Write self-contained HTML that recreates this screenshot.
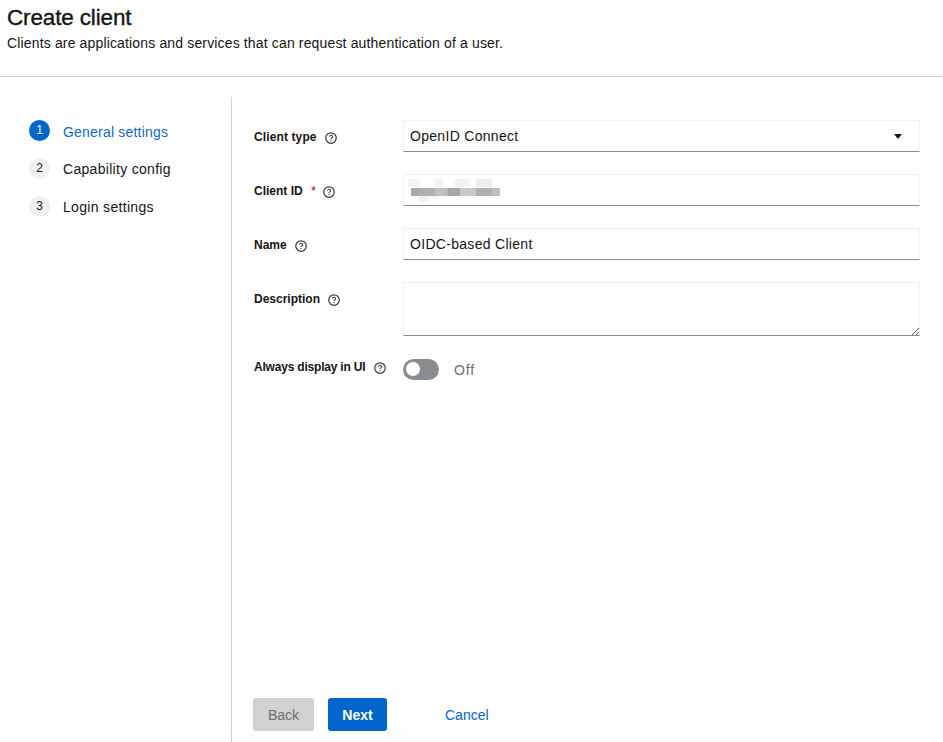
<!DOCTYPE html>
<html><head><meta charset="utf-8">
<style>
html,body{margin:0;padding:0;background:#fff;}
body{width:943px;height:742px;position:relative;overflow:hidden;font-family:"Liberation Sans",sans-serif;color:#151515;}
.a{position:absolute;white-space:nowrap;}
.t{line-height:20px;}
.title{left:7px;top:5px;font-size:22.5px;line-height:26px;letter-spacing:-0.15px;-webkit-text-stroke:0.35px #151515;}
.sub{left:7px;top:33px;font-size:14px;letter-spacing:0.15px;}
.hr{left:0;top:76px;width:943px;height:1px;background:#d2d2d2;}
.vr{left:231px;top:97px;width:1px;height:645px;background:#d2d2d2;}
.step{width:21px;height:21px;border-radius:50%;background:#f0f0f0;font-size:12px;line-height:21px;text-align:center;color:#151515;}
.step.on{background:#06c;color:#fff;}
.stxt{font-size:14px;letter-spacing:0.2px;}
.lbl{left:254px;font-size:12px;font-weight:bold;}
.help{width:12px;height:12px;}
.box{left:403px;width:517px;height:32px;box-sizing:border-box;border:1px solid #f0f0f0;border-bottom-color:#8a8d90;background:#fff;}
.val{font-size:14px;letter-spacing:0.3px;}
.btn{height:33px;border-radius:3px;font-size:14px;line-height:35px;text-align:center;box-sizing:border-box;}
</style></head><body>
<div class="a title">Create client</div>
<div class="a t sub">Clients are applications and services that can request authentication of a user.</div>
<div class="a hr"></div>
<div class="a vr"></div>

<div class="a step on" style="left:29px;top:120px;">1</div>
<div class="a t stxt" style="left:63px;top:122px;color:#1268c4;">General settings</div>
<div class="a step" style="left:29px;top:158px;">2</div>
<div class="a t stxt" style="left:63px;top:159px;letter-spacing:0.3px;">Capability config</div>
<div class="a step" style="left:29px;top:196px;">3</div>
<div class="a t stxt" style="left:63px;top:197px;letter-spacing:0.32px;">Login settings</div>

<div class="a t lbl" style="top:127px;letter-spacing:0.12px;">Client type</div>
<div class="a t lbl" style="top:181px;">Client ID</div>
<div class="a t lbl" style="top:235px;">Name</div>
<div class="a t lbl" style="top:289px;">Description</div>
<div class="a t lbl" style="top:357px;letter-spacing:-0.2px;">Always display in UI</div>
<div class="a" style="left:311px;top:182.5px;font-size:13px;line-height:15px;color:#a8140a;">*</div>

<svg class="a help" style="left:325.3px;top:131.8px" viewBox="0 0 12 12"><circle cx="6" cy="6" r="5.25" fill="none" stroke="#3c3f42" stroke-width="1.25"/><path d="M4.55 4.7a1.5 1.5 0 1 1 2.2 1.3c-.45.28-.75.5-.75 1.05" fill="none" stroke="#3c3f42" stroke-width="1.05"/><circle cx="6" cy="8.5" r=".65" fill="#3c3f42"/></svg>
<svg class="a help" style="left:322.8px;top:185.8px" viewBox="0 0 12 12"><circle cx="6" cy="6" r="5.25" fill="none" stroke="#3c3f42" stroke-width="1.25"/><path d="M4.55 4.7a1.5 1.5 0 1 1 2.2 1.3c-.45.28-.75.5-.75 1.05" fill="none" stroke="#3c3f42" stroke-width="1.05"/><circle cx="6" cy="8.5" r=".65" fill="#3c3f42"/></svg>
<svg class="a help" style="left:295px;top:240px" viewBox="0 0 12 12"><circle cx="6" cy="6" r="5.25" fill="none" stroke="#3c3f42" stroke-width="1.25"/><path d="M4.55 4.7a1.5 1.5 0 1 1 2.2 1.3c-.45.28-.75.5-.75 1.05" fill="none" stroke="#3c3f42" stroke-width="1.05"/><circle cx="6" cy="8.5" r=".65" fill="#3c3f42"/></svg>
<svg class="a help" style="left:328px;top:293.5px" viewBox="0 0 12 12"><circle cx="6" cy="6" r="5.25" fill="none" stroke="#3c3f42" stroke-width="1.25"/><path d="M4.55 4.7a1.5 1.5 0 1 1 2.2 1.3c-.45.28-.75.5-.75 1.05" fill="none" stroke="#3c3f42" stroke-width="1.05"/><circle cx="6" cy="8.5" r=".65" fill="#3c3f42"/></svg>
<svg class="a help" style="left:374px;top:362px" viewBox="0 0 12 12"><circle cx="6" cy="6" r="5.25" fill="none" stroke="#3c3f42" stroke-width="1.25"/><path d="M4.55 4.7a1.5 1.5 0 1 1 2.2 1.3c-.45.28-.75.5-.75 1.05" fill="none" stroke="#3c3f42" stroke-width="1.05"/><circle cx="6" cy="8.5" r=".65" fill="#3c3f42"/></svg>

<div class="a box" style="top:120px;"></div>
<div class="a t val" style="left:410px;top:126px;">OpenID Connect</div>
<svg class="a" style="left:894px;top:134px" width="8" height="5" viewBox="0 0 8 5"><path d="M0 0H8L4 5Z" fill="#151515"/></svg>

<div class="a box" style="top:174px;"></div>
<svg class="a" style="left:405px;top:176px" width="100" height="30" viewBox="0 0 100 30" shape-rendering="crispEdges">
<rect x="3" y="3" width="12" height="8" fill="#f3f3f3"/><rect x="30" y="3" width="8" height="8" fill="#f0f0f0"/><rect x="50" y="3" width="14" height="8" fill="#f2f2f2"/><rect x="71" y="3" width="16" height="8" fill="#efefef"/>
<rect x="6" y="12" width="8" height="8" fill="#a9a9a9"/><rect x="14" y="12" width="16" height="8" fill="#b0b0b0"/><rect x="30" y="12" width="9" height="8" fill="#c0c0c0"/><rect x="39" y="12" width="4" height="8" fill="#bbbbbb"/><rect x="43" y="12" width="12" height="8" fill="#a7a7a7"/><rect x="55" y="12" width="16" height="8" fill="#c8c8c8"/><rect x="71" y="12" width="16" height="8" fill="#b0b0b0"/><rect x="87" y="12" width="8" height="8" fill="#c0c0c0"/>
<rect x="14" y="20" width="8" height="6" fill="#f0f0f0"/><rect x="22" y="20" width="12" height="3" fill="#f5f5f5"/>
</svg>

<div class="a box" style="top:228px;"></div>
<div class="a t val" style="left:410px;top:234px;">OIDC-based Client</div>

<div class="a box" style="top:282px;height:54px;"></div>
<svg class="a" style="left:910px;top:326px" width="10" height="10" viewBox="0 0 10 10"><path d="M2 9L9 2M6 9L9 6" stroke="#555" stroke-width="1"/></svg>

<div class="a" style="left:403px;top:359px;width:36px;height:21px;border-radius:11px;background:#8a8d90;"></div>
<div class="a" style="left:406.4px;top:362.4px;width:14px;height:14px;border-radius:50%;background:#fff;"></div>
<div class="a t" style="left:454px;top:359.5px;font-size:14px;color:#6a6e73;letter-spacing:0.9px;">Off</div>

<div class="a btn" style="left:253px;top:698px;width:61px;background:#d2d2d2;color:#6a6e73;">Back</div>
<div class="a btn" style="left:328px;top:698px;width:59px;background:#06c;color:#fff;font-weight:bold;">Next</div>
<div class="a t" style="left:445px;top:705px;font-size:14px;color:#06c;">Cancel</div>
<div class="a" style="left:0;top:732px;width:760px;height:10px;background:linear-gradient(to bottom,rgba(0,0,0,0),rgba(0,0,0,0.018));"></div>
</body></html>
